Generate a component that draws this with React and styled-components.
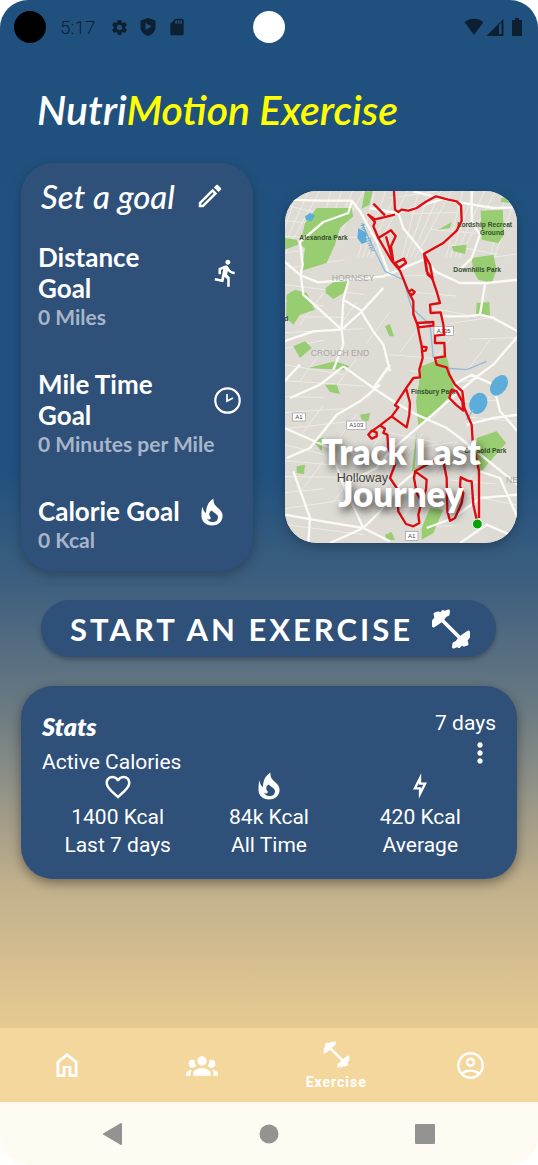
import React from "react";
import styled, { createGlobalStyle } from "styled-components";
import { MdSettings, MdOutlineEdit, MdDirectionsRun, MdFavoriteBorder, MdMoreVert, MdSdCard } from "react-icons/md";

const GlobalStyle = createGlobalStyle`
  * { box-sizing: border-box; }
  body { margin: 0; background: #fff; }
  button { font: inherit; color: inherit; background: none; border: 0; padding: 0; cursor: pointer; }
  h1, h2, h3, p { margin: 0; }
  svg { display: block; flex: none; }
`;

const Phone = styled.div`
  min-height: 100vh;
  display: flex;
  flex-direction: column;
  overflow: hidden;
  border-radius: 28px;
  color: #fff;
  font-family: Roboto, sans-serif;
`;

const Screen = styled.main`
  flex: 1;
  display: flex;
  flex-direction: column;
  background: linear-gradient(#20517e 0%, #21517e 46%, #41617f 58%, #6f7d83 70%, #c1b08c 86%, #e6ca92 100%);
`;

const StatusBar = styled.header`
  display: grid;
  grid-template-columns: 1fr 32px 1fr;
  align-items: center;
  height: 54px;
  padding: 0 14px;
  color: #0d2031;
`;

const StatusGroup = styled.div`
  display: flex;
  align-items: center;
  justify-content: ${(p) => (p.$end ? "flex-end" : "flex-start")};
  gap: ${(p) => (p.$end ? 2 : 10)}px;
`;

const Lens = styled.span`
  width: 32px;
  height: 32px;
  border-radius: 50%;
  background: ${(p) => p.$color};
`;

const Clock = styled.time`
  font-size: 19px;
  font-weight: 300;
  margin: 0 4px;
`;

const script = `font-family: Yellowtail, Lato, sans-serif; font-style: italic;`;

const Title = styled.h1`
  ${script}
  padding: 30px 37px 0;
  font-size: 41px;
  line-height: 52px;
  font-weight: 600;
`;

const Accent = styled.span`
  color: #ffff00;
`;

const CardRow = styled.section`
  display: grid;
  grid-template-columns: 1fr 1fr;
  gap: 32px;
  align-items: center;
  padding: 27px 21px 0;
`;

const GoalCard = styled.article`
  height: 408px;
  padding: 12px 12px 0 17px;
  border-radius: 32px;
  background: #2e5079;
  box-shadow: 0 4px 12px rgba(0, 0, 0, 0.25);
  font-family: Lato, sans-serif;
  font-weight: 700;
`;

const GoalHeading = styled.div`
  display: flex;
  align-items: center;
  gap: 20px;
  height: 42px;
  padding-left: 3px;
`;

const GoalTitle = styled.h2`
  ${script}
  font-size: 33px;
  font-weight: 500;
`;

const Goals = styled.div`
  display: flex;
  flex-direction: column;
  gap: 40px;
  padding-top: 25px;
`;

const GoalName = styled.div`
  display: flex;
  align-items: center;
  gap: 18px;
  font-size: 26px;
  line-height: 31px;
`;

const GoalLabel = styled.h3`
  font-size: inherit;
  font-weight: 700;
`;

const GoalValue = styled.p`
  font-size: 21px;
  line-height: 25px;
  color: #a7b6c9;
`;

const MapCard = styled.button`
  display: grid;
  height: 352px;
  overflow: hidden;
  border-radius: 32px;
  background: #e2dfda;
  box-shadow: 0 4px 12px rgba(0, 0, 0, 0.25);
  > * { grid-area: 1 / 1; min-width: 0; }
`;

const MapCaption = styled.span`
  align-self: end;
  z-index: 1;
  padding: 0 30px 29px;
  font: 800 35px/42px Lato, sans-serif;
  text-shadow: 2px 4px 8px rgba(0, 0, 0, 0.75);
`;

const StartButton = styled.button`
  display: flex;
  align-items: center;
  justify-content: center;
  gap: 18px;
  height: 57px;
  margin: 29px 42px 0 41px;
  padding-left: 4px;
  border-radius: 29px;
  background: #2e5079;
  box-shadow: 0 3px 4px rgba(0, 0, 0, 0.25);
`;

const StartText = styled.span`
  font: 700 31px/40px Lato, sans-serif;
  letter-spacing: 3px;
`;

const StatsCard = styled.section`
  margin: 29px 21px 24px;
  padding: 23px 21px 20px;
  border-radius: 32px;
  background: #2e5079;
  box-shadow: 0 4px 12px rgba(0, 0, 0, 0.4);
  font-size: 21px;
  line-height: 28px;
`;

const StatsHeader = styled.div`
  display: flex;
  justify-content: space-between;
  align-items: flex-start;
`;

const StatsTitle = styled.h2`
  ${script}
  font-size: 25px;
  line-height: 34px;
  font-weight: 800;
`;

const StatsName = styled.p`
  padding-top: 5px;
`;

const Period = styled.div`
  display: flex;
  flex-direction: column;
  align-items: flex-end;
`;

const MoreButton = styled.button`
  display: grid;
  place-items: center;
  width: 32px;
  height: 28px;
`;

const StatsGrid = styled.div`
  display: grid;
  grid-template-columns: repeat(3, 1fr);
  margin-top: -4px;
`;

const Stat = styled.div`
  display: flex;
  flex-direction: column;
  align-items: center;
`;

const StatIcon = styled.div`
  display: grid;
  align-items: center;
  height: 28px;
  margin-bottom: 3px;
`;

const TabBar = styled.nav`
  display: grid;
  grid-template-columns: repeat(4, 1fr);
  height: 74px;
  background: #f4d79d;
`;

const Tab = styled.button`
  display: flex;
  flex-direction: column;
  align-items: center;
  justify-content: center;
  gap: 6px;
  font: 700 14px/16px Roboto, sans-serif;
  letter-spacing: 1px;
`;

const SystemBar = styled.footer`
  display: grid;
  grid-template-columns: repeat(3, 1fr);
  place-items: center;
  height: 63px;
  padding: 0 35px;
  background: #fefbf3;
  color: #949391;
`;

const Icon = ({ size = 28, box = 24, children, ...rest }) => (
  <svg width={size} height={size} viewBox={`0 0 ${box} ${box}`} fill="currentColor" aria-hidden="true" {...rest}>
    {children}
  </svg>
);

const Fire = () => (
  <Icon size={28} box={28}>
    <path
      fillRule="evenodd"
      d="M15.500 0.500C15 5 17 7.500 20 10C23 12.500 25 15 24.500 19C24 24 19.500 27.500 14 27.500C8 27.500 3.500 23.500 3.500 18C3.500 14.500 3.500 11 4.500 8.500C5 12 6.500 14.500 8 15C8 9 10 4 15.500 0.500ZM13.500 12.500C11 14 10.500 17 12.500 19C13 20.500 12.500 21.500 11.500 21.500C10.500 21.500 9.500 21 9 20C9.500 22.500 11.500 24 14.500 24C18 24 20 22 20 19C20 16.500 17 15.500 13.500 12.500Z"
    />
  </Icon>
);

const ClockIcon = () => (
  <Icon size={27} box={27} fill="none" stroke="currentColor">
    <circle cx="13.500" cy="13.500" r="12.200" strokeWidth="2.200" />
    <path d="M13 7V14L19 11" strokeWidth="1.700" />
  </Icon>
);

const Bolt = () => (
  <Icon>
    <path d="M11 9.470V11H14.760L13 14.530V13H9.240L11 9.470M13 1L6 15H11V23L18 9H13V1Z" />
  </Icon>
);

const Dumbbell = ({ size }) => (
  <Icon size={size} box={40} stroke="currentColor" strokeLinecap="round" strokeLinejoin="round">
    <path d="M9 9L31 31" strokeWidth="3.800" />
    <path d="M2.500 17L2.500 12L5 9L4 5L7 4L10 5L12 2.500L14 3.500L17.500 2L17 5.500L14 7L11 11L7 14Z" strokeWidth="3" />
    <path d="M37.500 23L37.500 28L35 31L36 35L33 36L30 35L28 37.500L26 36.500L22.500 38L23 34.500L26 33L29 29L33 26Z" strokeWidth="3" />
  </Icon>
);

const Home = () => (
  <Icon size={24}>
    <path fillRule="evenodd" d="M12 0L22.500 8.500V24H13.500V15H10.500V24H1.500V8.500ZM12 3.400L4.300 9.800V21.200H7.700V13H16.300V21.200H19.700V9.800Z" />
  </Icon>
);

const Group = () => (
  <Icon size={32}>
    <path d="M12 5.500A3.500 3.500 0 0 1 15.500 9A3.500 3.500 0 0 1 12 12.500A3.500 3.500 0 0 1 8.500 9A3.500 3.500 0 0 1 12 5.500M5 8C5.560 8 6.080 8.150 6.530 8.420C6.380 9.850 6.800 11.270 7.660 12.380C7.160 13.340 6.160 14 5 14A3 3 0 0 1 2 11A3 3 0 0 1 5 8M19 8A3 3 0 0 1 22 11A3 3 0 0 1 19 14C17.840 14 16.840 13.340 16.340 12.380C17.200 11.270 17.620 9.850 17.470 8.420C17.920 8.150 18.440 8 19 8M5.500 18.250C5.500 16.180 8.410 14.500 12 14.500C15.590 14.500 18.500 16.180 18.500 18.250V20H5.500V18.250M0 20V18.500C0 17.110 1.890 15.940 4.450 15.600C3.860 16.280 3.500 17.220 3.500 18.250V20H0M24 20H20.500V18.250C20.500 17.220 20.140 16.280 19.550 15.600C22.110 15.940 24 17.110 24 18.500V20Z" />
  </Icon>
);

const Account = () => (
  <Icon size={27} box={27} fill="none" stroke="currentColor" strokeWidth="2.400">
    <circle cx="13.500" cy="13.500" r="12.200" />
    <circle cx="13.500" cy="10.300" r="3.500" />
    <path d="M5.500 21.500C9 17.600 18 17.600 21.500 21.500" />
  </Icon>
);

const streets = [
  "M13 45L120 48L215 48L240 80L290 170L330 275",
  "M215 50L205 85L130 112L60 172L68 240L62 270L70 330L185 435L190 480L160 555",
  "M13 230L62 272L115 293L310 275L430 225",
  "M355 85L370 130L430 205L465 260L540 295L620 295L713 285",
  "M205 290L190 345L185 435L245 380L310 310",
  "M190 345L240 375L280 440L310 480L330 560",
  "M400 20L520 50L640 70L713 68",
  "M575 20V110L600 150L575 220L540 255",
  "M615 300L600 390L640 400L713 440",
  "M485 395L560 395L600 390",
  "M13 470L100 440L180 435",
  "M270 70L350 85L500 40",
  "M713 455L640 540L585 580L330 800L290 850L210 890",
  "M13 590L60 540M30 640L120 600L190 545",
  "M190 545L280 610L340 650L410 690L500 730L540 760L713 900",
  "M280 610L330 540M13 730L150 790L190 900L250 1030",
  "M20 820L90 790L170 690L240 650L300 600",
  "M13 990L130 1010L250 1030L300 980L360 900L420 850",
  "M40 860L90 1000L85 1075M150 1075L250 1030L330 1070",
  "M520 600L575 570L640 600L660 680L713 740",
  "M560 720L640 700L713 690M600 860L660 880L713 1000",
  "M440 1030L520 1000L600 940L713 930M540 1075L620 1020L713 1060",
];

const minor = [];
for (let i = 0; i < 22; i++) {
  minor.push(`M${20 + i * 33} 19l-${50 + (i % 4) * 20} 200M13 ${60 + i * 48}l${120 + (i % 3) * 60} ${30 - (i % 5) * 14}M${330 + (i % 5) * 60} ${40 + i * 47}l140 ${(i % 4) * 16 - 20}M${60 + (i % 6) * 100} ${420 + i * 28}l70 -95`);
}

const parks = [
  "M75 115L110 70L215 70L220 95L180 130L165 180L140 235L65 258L75 190L60 180Z",
  "M13 160L50 165L55 180L13 195Z",
  "M255 20H278L268 60L245 72Z",
  "M137 310L160 293L205 290L190 325L160 343L137 325Z",
  "M20 330L45 315L80 325L105 375L60 390L40 420L18 400Z",
  "M40 485L75 470L95 490L60 520Z",
  "M85 550L165 530L210 545L190 555Z",
  "M602 78L668 75L672 150L655 175L605 165Z",
  "M515 185L560 180L555 208L520 200Z",
  "M575 220L640 210L650 255L635 295L595 285L580 260Z",
  "M590 355L628 352L630 395L588 390Z",
  "M475 135L515 112L510 130Z",
  "M315 425L330 418L342 455L328 455Z",
  "M665 40L690 38V55L662 52Z",
  "M425 545L500 515L525 620L475 670L415 725L408 650Z",
  "M590 760L650 740L678 775L600 865L588 800Z",
  "M135 600L170 600L180 628L150 622Z",
  "M50 845L75 840L72 868L50 865Z",
  "M410 740L395 860L435 840L405 850Z",
  "M425 1030L450 970L490 975L460 1045L425 1065Z",
  "M315 1050L335 1042L345 1065L320 1068Z",
  "M100 770L130 758L125 800Z",
  "M240 690L270 685L265 710L245 705Z",
];

const route = [
  "M342 19L345 75L355 82L365 75L385 78L410 70L440 50L468 35L505 45L530 50L543 62L545 108L530 138L490 175L432 207L440 260L458 285L470 320L480 355L450 360L452 385L482 383L490 420L493 450L465 453L465 475L493 475L495 515L465 520L470 540L500 548L508 570L525 600L547 620L553 670L575 720L578 770L597 860L597 1000",
  "M590 1005L580 960L575 890L562 888L542 878L540 905L550 925L545 955L525 1000L510 1008L502 980L500 880L490 830L460 830L405 860L402 880L410 925L425 950L415 990L418 1015L400 1025L378 1018L355 980L350 910L330 880L345 840L325 790L322 750L310 745L315 732L300 722",
  "M405 860L440 885L438 915L425 950",
  "M508 640L515 615L530 620L547 650L550 678L530 662Z",
  "M425 485L428 520L418 555L420 578L400 580L380 608L345 662L355 668L335 695L380 728L388 690L390 655L378 610",
  "M335 695L300 722L275 740M265 750L275 738L290 743L290 755L275 762Z",
  "M280 57L315 92M345 90L285 104L265 90L285 112L280 125L295 160L335 228L360 258L385 320L400 350L400 388L412 420L425 485L440 488L438 497L427 500",
  "M385 322L395 315L404 322L398 330L388 328",
  "M412 415L460 412L460 423L415 428Z",
  "M295 160L333 137L347 155L333 185L340 232L328 190L318 155",
  "M345 235L372 222L378 235L357 250Z",
  "M432 207L450 240L458 282L443 270L435 220",
].join("");

const RouteMap = () => (
  <svg width="100%" height="100%" viewBox="13 19 700 1056" preserveAspectRatio="xMidYMid slice" role="img" aria-label="Route of the last journey">
    <rect x="13" y="19" width="700" height="1056" fill="#dedbd5" />
    <path d={minor.join("")} stroke="#edebe6" strokeWidth="3" fill="none" />
    <path d={parks.join("")} fill="#98cd72" />
    <path d={streets.join("")} stroke="#fbfaf7" strokeWidth="7" fill="none" strokeLinejoin="round" />
    <g fill="#5cadd9">
      <path d="M75 95L90 85L105 92L95 110L78 106ZM235 130L258 145L260 172L245 178L232 160Z" />
      <ellipse cx="595" cy="656" rx="26" ry="33" transform="rotate(25 595 656)" />
      <ellipse cx="657" cy="602" rx="23" ry="34" transform="rotate(35 657 602)" />
    </g>
    <path d="M245 115L315 260L370 285L395 370L450 420L460 520M490 550L560 555L620 530M580 675L560 705" stroke="#8fbbd8" strokeWidth="4" fill="none" />
    <g fontFamily="Liberation Sans, sans-serif" fontWeight="700" fontSize="20" fill="#35502f">
      <text x="58" y="167">Alexandra Park</text>
      <text x="532" y="126">Lordship Recreat</text>
      <text x="600" y="150">Ground</text>
      <text x="520" y="262">Downhills Park</text>
      <text x="13" y="410">d</text>
      <text x="393" y="629">Finsbury Park</text>
      <text x="553" y="806">Clissold Park</text>
    </g>
    <g fontFamily="Liberation Sans, sans-serif" fill="#a9a7a5" fontSize="26">
      <text x="155" y="290">HORNSEY</text>
      <text x="92" y="515">CROUCH END</text>
      <text x="678" y="894">NE</text>
      <text x="240" y="122" fontSize="19" fill="#5e9fc4" transform="rotate(68 240 122)">New River</text>
    </g>
    <text x="170" y="893" fontFamily="Liberation Sans, sans-serif" fontSize="38" fill="#444">Holloway</text>
    <g fill="#fff" stroke="#999" strokeWidth="2">
      <rect x="38" y="685" width="38" height="24" />
      <rect x="200" y="709" width="58" height="26" />
      <rect x="462" y="425" width="58" height="27" />
      <rect x="376" y="1041" width="38" height="26" />
    </g>
    <g fontFamily="Liberation Sans, sans-serif" fontSize="18" fill="#444" textAnchor="middle">
      <text x="57" y="703">A1</text>
      <text x="229" y="728">A103</text>
      <text x="491" y="445">A105</text>
      <text x="395" y="1060">A1</text>
    </g>
    <path d={route} stroke="#dd0d12" strokeWidth="7" fill="none" strokeLinejoin="round" />
    <circle cx="592" cy="1018" r="15" fill="#08a308" stroke="#fff" strokeWidth="3" />
  </svg>
);

const goals = [
  { name: "Distance Goal", value: "0 Miles", icon: <MdDirectionsRun size={30} /> },
  { name: "Mile Time Goal", value: "0 Minutes per Mile", icon: <ClockIcon /> },
  { name: "Calorie Goal", value: "0 Kcal", icon: <Fire /> },
];

const stats = [
  { value: "1400 Kcal", label: "Last 7 days", icon: <MdFavoriteBorder size={30} /> },
  { value: "84k Kcal", label: "All Time", icon: <Fire /> },
  { value: "420 Kcal", label: "Average", icon: <Bolt /> },
];

export default function App() {
  return (
    <>
      <GlobalStyle />
      <Phone>
        <Screen>
          <StatusBar>
            <StatusGroup>
              <Lens $color="#000" />
              <Clock>5:17</Clock>
              <MdSettings size={19} />
              <Icon size={18} box={18}>
                <path fillRule="evenodd" d="M9 0L16.500 2.500V9C16.500 13.500 13 17 9 18C5 17 1.500 13.500 1.500 9V2.500ZM6.500 5V12L12.500 8.500Z" />
              </Icon>
              <MdSdCard size={20} />
            </StatusGroup>
            <Lens $color="#fff" />
            <StatusGroup $end>
              <Icon size={20} box={20}>
                <path d="M10 18L0.500 5C6 0.500 14 0.500 19.500 5Z" />
              </Icon>
              <Icon size={18} box={18}>
                <path fillRule="evenodd" d="M17.500 1V18H0.500ZM13 7V16H15.500V4.500Z" />
              </Icon>
              <Icon size={18} box={18}>
                <path d="M9 0H13V2H16V18H6V2H9Z" />
              </Icon>
            </StatusGroup>
          </StatusBar>

          <Title>
            Nutri<Accent>Motion Exercise</Accent>
          </Title>

          <CardRow>
            <GoalCard>
              <GoalHeading>
                <GoalTitle>Set a goal</GoalTitle>
                <button aria-label="Edit goals">
                  <MdOutlineEdit size={30} />
                </button>
              </GoalHeading>
              <Goals>
                {goals.map((g) => (
                  <div key={g.name}>
                    <GoalName>
                      <GoalLabel>{g.name}</GoalLabel>
                      {g.icon}
                    </GoalName>
                    <GoalValue>{g.value}</GoalValue>
                  </div>
                ))}
              </Goals>
            </GoalCard>
            <MapCard>
              <RouteMap />
              <MapCaption>Track Last Journey</MapCaption>
            </MapCard>
          </CardRow>

          <StartButton>
            <StartText>START AN EXERCISE</StartText>
            <Dumbbell size={40} />
          </StartButton>

          <StatsCard>
            <StatsHeader>
              <div>
                <StatsTitle>Stats</StatsTitle>
                <StatsName>Active Calories</StatsName>
              </div>
              <Period>
                <span>7 days</span>
                <MoreButton aria-label="More options">
                  <MdMoreVert size={32} />
                </MoreButton>
              </Period>
            </StatsHeader>
            <StatsGrid>
              {stats.map((s) => (
                <Stat key={s.label}>
                  <StatIcon>{s.icon}</StatIcon>
                  <span>{s.value}</span>
                  <span>{s.label}</span>
                </Stat>
              ))}
            </StatsGrid>
          </StatsCard>
        </Screen>

        <TabBar>
          <Tab aria-label="Home">
            <Home />
          </Tab>
          <Tab aria-label="Community">
            <Group />
          </Tab>
          <Tab aria-current="page">
            <Dumbbell size={27} />
            Exercise
          </Tab>
          <Tab aria-label="Profile">
            <Account />
          </Tab>
        </TabBar>

        <SystemBar>
          <button aria-label="Back">
            <Icon size={22} box={22}>
              <path d="M2 11L19 1V21Z" stroke="currentColor" strokeWidth="2" strokeLinejoin="round" />
            </Icon>
          </button>
          <button aria-label="Home screen">
            <Icon size={20} box={20}>
              <circle cx="10" cy="10" r="9.500" />
            </Icon>
          </button>
          <button aria-label="Recent apps">
            <Icon size={20} box={20}>
              <rect width="20" height="20" rx="1" />
            </Icon>
          </button>
        </SystemBar>
      </Phone>
    </>
  );
}
